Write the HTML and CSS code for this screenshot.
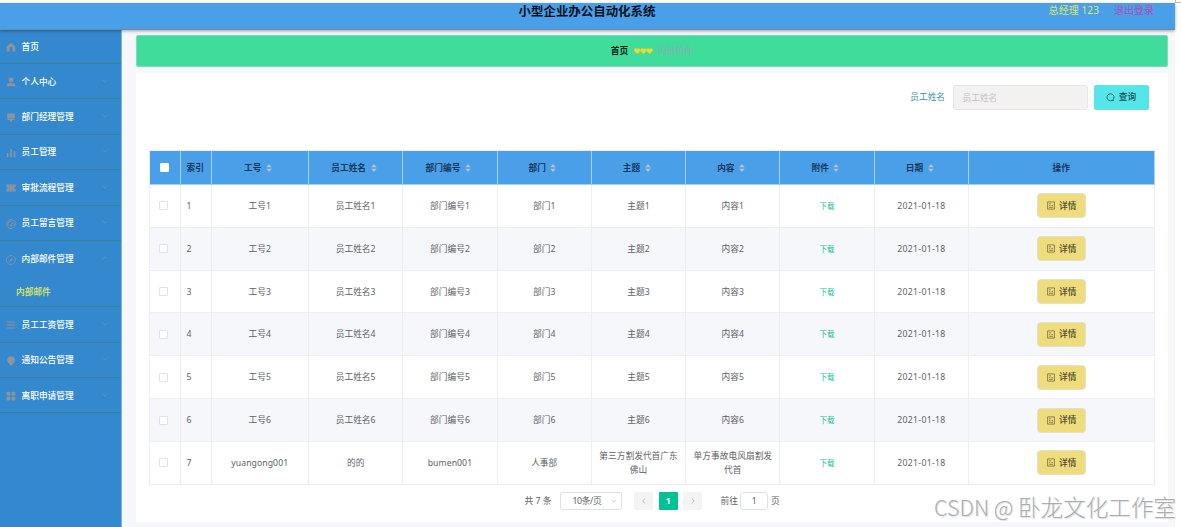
FILE: index.html
```
<!DOCTYPE html>
<html lang="zh-CN">
<head>
<meta charset="utf-8">
<title>小型企业办公自动化系统</title>
<link rel="stylesheet" href="styles.css">
</head>
<body>
<svg class="defs" width="0" height="0">
  <symbol id="down" viewBox="0 0 8 8"><path d="M1.6 2.8 4 5.2 6.4 2.8" fill="none" stroke="currentColor" stroke-width=".8"/></symbol>
  <symbol id="up" viewBox="0 0 8 8"><path d="M1.6 5.2 4 2.8 6.4 5.2" fill="none" stroke="currentColor" stroke-width=".8"/></symbol>
  <symbol id="sort" viewBox="0 0 6 10"><path d="M3 1 5.7 4.3H.3zM3 9 .3 5.7h5.4z" fill="currentColor"/></symbol>
  <symbol id="doc" viewBox="0 0 8 9"><path d="M.6.9h6.8v7.2H.6zM2 6.3h4M2 4.6h1.300M4.500 4.600H6M2 2.800h2" fill="none" stroke="currentColor" stroke-width=".6"/></symbol>
</svg>
<div class="app">
  <header class="header">
    <h1 class="title">小型企业办公自动化系统</h1>
    <div class="user"><span class="name">总经理 123</span><span class="logout">退出登录</span></div>
  </header>
  <div class="body">
    <nav class="side">
      <div class="item home"><svg class="ico" viewBox="0 0 10 10"><path d="M5 .8 9.300 4.500V9.400H6.500V6.200a1.500 1.500 0 0 0-3 0V9.400H.7V4.500z" fill="currentColor"/></svg><span>首页</span></div>
      <div class="item"><svg class="ico" viewBox="0 0 10 10"><circle cx="5" cy="3" r="2.400" fill="currentColor"/><path d="M.8 9.300V8q0-1.700 1.800-1.700h4.800Q9.200 6.300 9.200 8v1.300z" fill="currentColor"/></svg><span>个人中心</span><svg class="arr"><use href="#down"/></svg></div>
      <div class="item"><svg class="ico" viewBox="0 0 10 10"><path d="M1.200 .6h7.600v4.400H1.200zM1.200 5.500h7.600L8.300 7.100H6.300L5 9.900 3.700 7.100H1.700z" fill="currentColor"/></svg><span>部门经理管理</span><svg class="arr"><use href="#down"/></svg></div>
      <div class="item"><svg class="ico" viewBox="0 0 10 10"><path d="M.8 5h1.700v4.300H.8zM4.200 1h1.700v8.300H4.200zM7.600 3.300h1.700v6H7.600z" fill="currentColor"/></svg><span>员工管理</span><svg class="arr"><use href="#down"/></svg></div>
      <div class="item"><svg class="ico" viewBox="0 0 10 10"><path d="M.2 1.600h9.600v2a1.400 1.400 0 0 0 0 2.800v2H.2v-2a1.400 1.400 0 0 0 0-2.800z" fill="currentColor"/><path d="M3.500 2v6M6.500 2v6" stroke="#3488ce" stroke-width=".4" stroke-dasharray="1 .7"/></svg><span>审批流程管理</span><svg class="arr"><use href="#down"/></svg></div>
      <div class="item"><svg class="ico" viewBox="0 0 10 10"><g fill="none" stroke="currentColor" stroke-width=".8"><circle cx="5" cy="5" r="4.500"/><path d="M2.200 6.500A3 3 0 0 1 6 2.400M7.700 4a3 3 0 0 1 .1 2.500M5 6.500 6.600 3.300"/><circle cx="5" cy="6.600" r=".8"/></g></svg><span>员工留言管理</span><svg class="arr"><use href="#down"/></svg></div>
      <div class="group">
        <div class="item"><svg class="ico" viewBox="0 0 10 10"><circle cx="5" cy="5" r="4.500" fill="none" stroke="currentColor" stroke-width=".8"/><path d="M6.800 2.700 5.700 5.600 3.200 7.300 4.300 4.400z" fill="currentColor"/></svg><span>内部邮件管理</span><svg class="arr"><use href="#up"/></svg></div>
        <div class="sub">内部邮件</div>
      </div>
      <div class="item"><svg class="ico" viewBox="0 0 10 10"><path d="M.7 2h8.600M.7 5h8.600M.7 8h8.600" stroke="currentColor"/></svg><span>员工工资管理</span><svg class="arr"><use href="#down"/></svg></div>
      <div class="item"><svg class="ico" viewBox="0 0 10 10"><path d="M5 .3a3.900 3.900 0 0 1 3.900 3.900C8.900 6.500 6.500 8 5 9.900 3.500 8 1.100 6.500 1.100 4.200A3.900 3.900 0 0 1 5 .3z" fill="currentColor"/></svg><span>通知公告管理</span><svg class="arr"><use href="#down"/></svg></div>
      <div class="item"><svg class="ico" viewBox="0 0 10 10"><g fill="currentColor"><rect x=".7" y=".8" width="3.700" height="3.700" rx=".6"/><rect x="5.600" y=".8" width="3.700" height="3.700" rx=".6"/><rect x=".7" y="5.700" width="3.700" height="3.700" rx=".6"/><rect x="5.600" y="5.700" width="3.700" height="3.700" rx=".6"/></g></svg><span>离职申请管理</span><svg class="arr"><use href="#down"/></svg></div>
    </nav>
    <main class="main">
      <div class="crumb"><b>首页</b><svg class="hearts" viewBox="0 0 19 6"><g fill="#f5d62c"><path id="h" d="M3.200 5.900.4 3.200C-.8 1.400 1.700-.8 3.200 1 4.700-.8 7.200 1.400 6 3.200z"/><use href="#h" x="6.200"/><use href="#h" x="12.400"/></g></svg><span>内部邮件</span></div>
      <section class="panel">
        <div class="search">
          <label>员工姓名</label>
          <div class="field">员工姓名</div>
          <button class="query"><svg viewBox="0 0 9 9"><path d="M6.300 7.300a3.500 3.500 0 1 0-3.600 0M6 7.400H8" fill="none" stroke="currentColor" stroke-width=".8"/><path d="M2.700 7.300a3.500 3.500 0 0 0 3.600 0" fill="none" stroke="currentColor" stroke-width=".8"/></svg>查询</button>
        </div>
        <div class="table">
          <div class="row head"><div><i class="box"></i></div><div>索引</div><div>工号<svg><use href="#sort"/></svg></div><div>员工姓名<svg><use href="#sort"/></svg></div><div>部门编号<svg><use href="#sort"/></svg></div><div>部门<svg><use href="#sort"/></svg></div><div>主题<svg><use href="#sort"/></svg></div><div>内容<svg><use href="#sort"/></svg></div><div>附件<svg><use href="#sort"/></svg></div><div>日期<svg><use href="#sort"/></svg></div><div>操作</div></div>
          <div class="row"><div><i class="box"></i></div><div>1</div><div>工号1</div><div>员工姓名1</div><div>部门编号1</div><div>部门1</div><div>主题1</div><div>内容1</div><div class="link">下载</div><div>2021-01-18</div><div><button class="detail"><svg><use href="#doc"/></svg>详情</button></div></div>
          <div class="row"><div><i class="box"></i></div><div>2</div><div>工号2</div><div>员工姓名2</div><div>部门编号2</div><div>部门2</div><div>主题2</div><div>内容2</div><div class="link">下载</div><div>2021-01-18</div><div><button class="detail"><svg><use href="#doc"/></svg>详情</button></div></div>
          <div class="row"><div><i class="box"></i></div><div>3</div><div>工号3</div><div>员工姓名3</div><div>部门编号3</div><div>部门3</div><div>主题3</div><div>内容3</div><div class="link">下载</div><div>2021-01-18</div><div><button class="detail"><svg><use href="#doc"/></svg>详情</button></div></div>
          <div class="row"><div><i class="box"></i></div><div>4</div><div>工号4</div><div>员工姓名4</div><div>部门编号4</div><div>部门4</div><div>主题4</div><div>内容4</div><div class="link">下载</div><div>2021-01-18</div><div><button class="detail"><svg><use href="#doc"/></svg>详情</button></div></div>
          <div class="row"><div><i class="box"></i></div><div>5</div><div>工号5</div><div>员工姓名5</div><div>部门编号5</div><div>部门5</div><div>主题5</div><div>内容5</div><div class="link">下载</div><div>2021-01-18</div><div><button class="detail"><svg><use href="#doc"/></svg>详情</button></div></div>
          <div class="row"><div><i class="box"></i></div><div>6</div><div>工号6</div><div>员工姓名6</div><div>部门编号6</div><div>部门6</div><div>主题6</div><div>内容6</div><div class="link">下载</div><div>2021-01-18</div><div><button class="detail"><svg><use href="#doc"/></svg>详情</button></div></div>
          <div class="row"><div><i class="box"></i></div><div>7</div><div>yuangong001</div><div>的的</div><div>bumen001</div><div>人事部</div><div>第三方割发代首广东佛山</div><div>单方事故电风扇割发代首</div><div class="link">下载</div><div>2021-01-18</div><div><button class="detail"><svg><use href="#doc"/></svg>详情</button></div></div>
        </div>
        <div class="pager">
          <span class="total">共 7 条</span>
          <div class="size"><span>10条/页</span><svg><use href="#down"/></svg></div>
          <div class="pg"><svg viewBox="0 0 8 8"><path d="M5 1.500 2.800 4 5 6.500" fill="none" stroke="currentColor" stroke-width=".9"/></svg></div>
          <div class="pg on">1</div>
          <div class="pg"><svg viewBox="0 0 8 8"><path d="M3 1.500 5.200 4 3 6.500" fill="none" stroke="currentColor" stroke-width=".9"/></svg></div>
          <span class="goto">前往</span><div class="num">1</div><span>页</span>
        </div>
      </section>
    </main>
  </div>
</div>
<div class="edge"></div>
<div class="mark"><span>CSDN @</span>卧龙文化工作室</div>
</body>
</html>
```
FILE: styles.css
```
* { box-sizing: border-box; }
body {
  margin: 0;
  height: 527px;
  overflow: hidden;
  background: #fff;
  color: #606266;
  font: 8.7px/14px "Noto Sans", "Noto Sans CJK SC", sans-serif;
}
svg { display: block; flex: none; }
button { font: inherit; margin: 0; padding: 0; }
.defs { position: absolute; }
.app { width: 1175px; padding-top: 3px; }

.header {
  position: relative;
  height: 27px;
  display: grid;
  grid-template-columns: 1fr auto 1fr;
  background: #4a9fe9;
  border-bottom: 1px solid #7089a3;
  box-shadow: 0 1px 3px rgba(0, 0, 0, .35);
  z-index: 1;
}
.title {
  grid-column: 2;
  margin: 0;
  padding-right: 1px;
  font-size: 12.45px;
  line-height: 17px;
  color: #071018;
}
.user {
  display: flex;
  justify-content: flex-end;
  gap: 15px;
  padding-right: 21px;
  font-size: 10px;
  line-height: 15px;
}
.name { color: #dbe763; letter-spacing: .1px; }
.logout { color: #ae4db4; }

.body { display: flex; height: 497px; }
.side { width: 121.500px; background: #3488ce; border-right: 1px solid #80b3df; color: #fff; }
.item {
  height: 35.400px;
  display: flex;
  align-items: center;
  border-bottom: 1px solid #3a8099;
  padding: 1px 12px 0 6px;
  font-weight: 500;
}
.home { height: 34px; padding-top: 0; }
.ico { width: 10px; height: 10px; margin-right: 5.500px; color: #909399; position: relative; top: .5px; }
.arr { width: 8px; height: 8px; margin: 0 0 2px auto; color: #6597c0; }
.group { border-bottom: 1px solid #3a8099; height: 66.300px; }
.group .item { border-bottom: 0; }
.sub { padding: 8.500px 0 0 16px; color: #e0ee50; line-height: 14px; font-weight: 500; }

.main { flex: 1; background: #f6f7fa; padding: 5px 7px 0 14px; }
.crumb {
  height: 32px;
  display: flex;
  align-items: center;
  justify-content: center;
  background: #3fdc9b;
  border: 1px solid #78dfb6;
  border-radius: 2px;
  color: #8cadb5;
}
.crumb b { color: #06251a; }
.hearts { width: 19px; height: 6px; margin: 0 5px 0 6px; }
.panel { margin-top: 6px; height: 449px; background: #fff; padding: 12px 13px 0; }

.search {
  height: 65.400px;
  display: flex;
  align-items: flex-start;
  justify-content: flex-end;
  padding-right: 6.500px;
  line-height: 25px;
}
.search label { color: #3e9097; margin-right: 7.500px; }
.field {
  width: 135px;
  height: 25px;
  line-height: 24px;
  padding-left: 9px;
  margin-right: 6.500px;
  border: 1px solid #e3e6ec;
  border-radius: 3px;
  background: #f4f1f1;
  color: #bfc3cc;
}
.query {
  width: 54.500px;
  height: 24.500px;
  display: flex;
  align-items: center;
  justify-content: center;
  gap: 3.500px;
  border: 1px solid #65dfe7;
  border-radius: 2px;
  background: #55e6e9;
  color: #214b50;
  font-weight: 500;
}
.query svg { width: 9px; height: 9px; }

.table { width: 1006px; border: 1px solid #ebeef5; border-width: 1px 0 0 1px; }
.row {
  display: grid;
  grid-template-columns: 31px 31px 97.500px 94.300px 94.300px 94.300px 94.300px 94.300px 94.300px 94.300px 1fr;
  height: 42.870px;
  text-align: center;
}
.row > div {
  display: flex;
  align-items: center;
  justify-content: center;
  border: 0 solid #ebeef5;
  border-width: 0 1px 1px 0;
  padding: 0 6px;
  letter-spacing: .04px;
}
.row > div:nth-child(1) { padding: 0; }
.row > div:nth-child(2) { justify-content: flex-start; }
.row > div:nth-child(3),
.row > div:nth-child(5) { letter-spacing: .06px; }
.row > div:nth-child(10) { letter-spacing: .28px; }
.row > div.link { color: #13c199; font-size: 7.500px; }
.row:nth-child(odd) { background: #f5f7fa; }
.row.head {
  height: 33.500px;
  background: #4a9fe9;
  color: #17385e;
  font-weight: 700;
}
.row.head > div { border-color: #a6cff4; letter-spacing: 0; }
.head svg { width: 6px; height: 10px; margin: 0 3.500px 0 4.500px; color: #b9c2cf; }
.box { width: 9px; height: 9px; background: #fff; border: 1px solid #dfe2e8; border-radius: 1px; margin-right: 2px; }
.head .box { margin-right: 0; border-color: #fff; }
.detail {
  width: 49px;
  height: 25px;
  margin-left: 1px;
  display: flex;
  align-items: center;
  justify-content: center;
  gap: 4px;
  border: 1px solid #e2e0cf;
  border-radius: 4px;
  background: #efdd7d;
  color: #4c482f;
  font-weight: 500;
}
.detail svg { width: 8px; height: 9px; }

.pager { display: flex; align-items: center; margin: 7px 0 0 376px; height: 18px; }
.total { width: 35px; white-space: nowrap; }
.size {
  width: 62.500px;
  height: 18px;
  display: flex;
  align-items: center;
  justify-content: space-between;
  padding: 0 3px 0 12px;
  border: 1px solid #dfe2e8;
  border-radius: 2px;
  margin-right: 12px;
}
.size span { letter-spacing: -.35px; }
.size svg { width: 8px; height: 8px; color: #c0c4cc; }
.pg {
  width: 19px;
  height: 18px;
  margin-right: 5.700px;
  display: flex;
  align-items: center;
  justify-content: center;
  background: #f4f4f5;
  border-radius: 1px;
  color: #b4b8c0;
}
.pg svg { width: 8px; height: 8px; }
.pg.on { background: #00c292; color: #fff; font-weight: 700; }
.goto { margin-left: 12.500px; margin-right: 2px; }
.num { width: 28.500px; height: 18px; line-height: 16px; text-align: center; border: 1px solid #dfe2e8; border-radius: 3px; margin-right: 2.500px; }

/* Overlays above the page */
.edge { position: absolute; right: 0; top: 0; width: 6px; height: 3px; border: solid #b9b9b9; border-width: 0 0 1px 1px; }
.mark {
  position: absolute;
  left: 934px;
  top: 492px;
  display: flex;
  white-space: nowrap;
  font: 300 22.600px/30px "Noto Sans CJK SC", sans-serif;
  color: #aaadb0;
  text-shadow: -1px -1px 0 #fff, 1px 1px 1px #ddd;
}
.mark span { width: 84px; font-size: 21.500px; white-space: pre; }
```
